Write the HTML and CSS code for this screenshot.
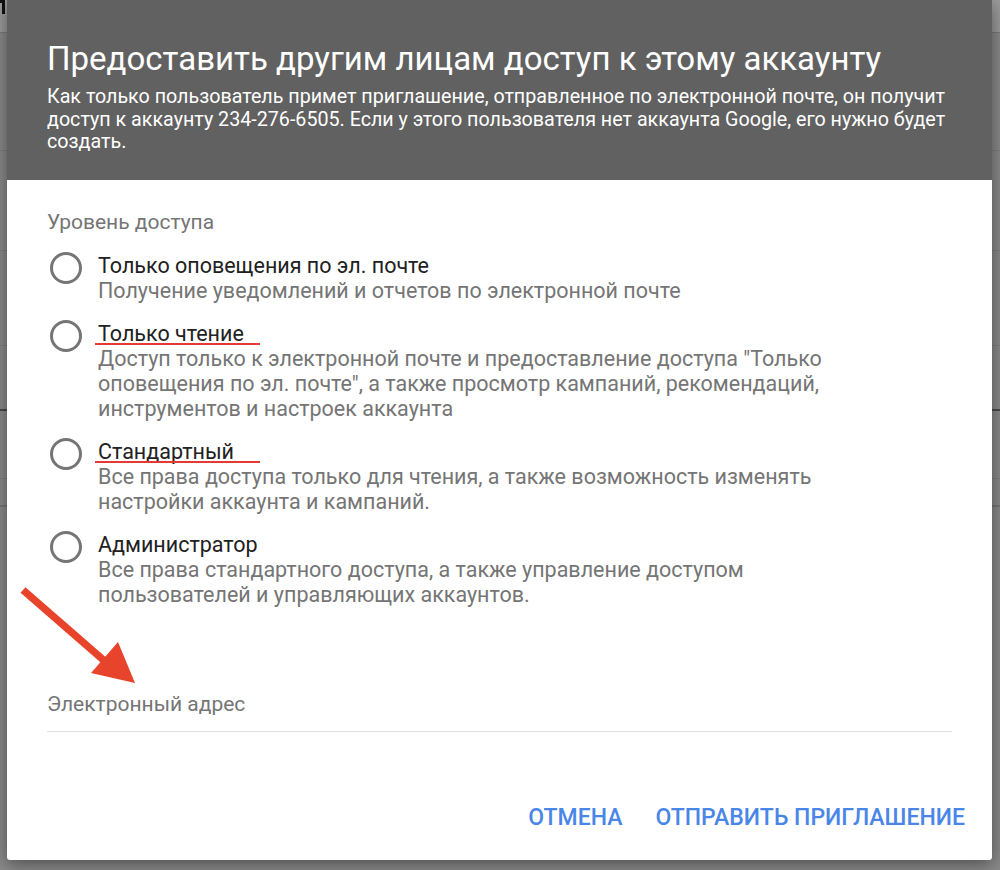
FILE: index.html
```html
<!DOCTYPE html>
<html lang="ru">
<head>
  <meta charset="UTF-8">
  <title>Доступ к аккаунту</title>
  <link rel="stylesheet" href="styles.css">
</head>
<body>
  <!-- страница под затемнением -->
  <div class="page">
    <div class="page-bar"><span class="page-corner"></span></div>
    <div class="page-row r1"></div>
    <div class="page-row r2"></div>
    <div class="page-row r3"></div>
    <div class="page-row r4"></div>
    <div class="page-row r5"></div>
    <div class="page-row r6"></div>
  </div>

  <div class="dialog">
    <div class="dialog-head">
      <h1>Предоставить другим лицам доступ к этому аккаунту</h1>
      <p>Как только пользователь примет приглашение, отправленное по электронной почте, он получит доступ к аккаунту 234-276-6505. Если у этого пользователя нет аккаунта Google, его нужно будет создать.</p>
    </div>

    <div class="dialog-body">
      <div class="section-label">Уровень доступа</div>

      <div class="option">
        <span class="radio"></span>
        <div class="option-text">
          <div class="option-title">Только оповещения по эл. почте</div>
          <div class="option-desc">Получение уведомлений и отчетов по электронной почте</div>
        </div>
      </div>

      <div class="option">
        <span class="radio"></span>
        <div class="option-text">
          <div class="option-title">Только чтение<span class="mark"></span></div>
          <div class="option-desc">Доступ только к электронной почте и предоставление доступа "Только оповещения по эл. почте", а также просмотр кампаний, рекомендаций, инструментов и настроек аккаунта</div>
        </div>
      </div>

      <div class="option">
        <span class="radio"></span>
        <div class="option-text">
          <div class="option-title">Стандартный<span class="mark"></span></div>
          <div class="option-desc">Все права доступа только для чтения, а также возможность изменять настройки аккаунта и кампаний.</div>
        </div>
      </div>

      <div class="option">
        <span class="radio"></span>
        <div class="option-text">
          <div class="option-title">Администратор</div>
          <div class="option-desc">Все права стандартного доступа, а также управление доступом пользователей и управляющих аккаунтов.</div>
        </div>
      </div>

      <div class="field">Электронный адрес</div>
    </div>

    <div class="dialog-actions">
      <button class="btn">Отмена</button>
      <button class="btn">Отправить приглашение</button>
    </div>

    <svg class="arrow" width="140" height="120" viewBox="0 0 140 120">
      <line x1="13" y1="10" x2="98" y2="84" stroke="#e8442b" stroke-width="7.5"/>
      <polygon points="125,103 81,93 108,62" fill="#e8442b"/>
    </svg>
  </div>
</body>
</html>
```

FILE: styles.css
```css
html, body { margin: 0; padding: 0; }
body {
  font-family: Roboto, "Noto Sans", Arial, sans-serif;
  background-color: #8a8a8a;
  width: 1000px; height: 870px; overflow: hidden;
  position: relative;
}

/* фон */
.page-bar { position: relative; height: 32px; background: #9c9c9c; border-bottom: 1px solid #7a7a7a; }
.page-corner {
  position: absolute; left: 0; top: 0; width: 5px; height: 14px;
  border-top: 3px solid #111; border-right: 3px solid #111; box-sizing: border-box;
}
.page-row { border-bottom: 1px solid #7f7f7f; }
.r1 { height: 117px; }
.r2 { height: 99px; }
.r3 { height: 94px; }
.r4 { height: 63px; border-bottom: 2px solid #4a4a4a; }
.r5 { height: 67px; }
.r6 { height: 26px; border-bottom: 2px solid #777; }

/* диалог */
.dialog {
  position: absolute; left: 7px; top: 0; width: 985px;
  background: #fff; border-radius: 0 0 3px 3px;
  box-shadow: 0 4px 18px rgba(0, 0, 0, 0.45);
  color: #212121;
}
.dialog-head {
  background: #616161; color: #fff;
  padding: 40px 40px 26px;
}
.dialog-head h1 {
  margin: 0; font-size: 33px; line-height: 38px; font-weight: 400;
}
.dialog-head p {
  margin: 8px 0 0; font-size: 19.7px; line-height: 22.5px;
}

.dialog-body { padding: 30px 40px 0; }
.section-label { font-size: 21px; line-height: 25px; color: #757575; margin-bottom: 18px; }

.option { display: flex; align-items: flex-start; margin-bottom: 18px; }
.radio {
  flex: none; width: 26px; height: 26px; border: 3px solid #757575; border-radius: 50%;
  margin: -1px 16px 0 3px;
}
.option-text { flex: 1; max-width: 750px; }
.option-title { position: relative; display: inline-block; font-size: 21.5px; line-height: 25px; color: #212121; }
.option-desc { font-size: 21.5px; line-height: 25px; color: #757575; }
.mark {
  position: absolute; left: -3px; bottom: 1px; width: 165px; height: 2px;
  background: #e53935;
}

.field {
  margin-top: 85px; padding-bottom: 14px;
  font-size: 21px; line-height: 25px; color: #757575;
  border-bottom: 1px solid #e0e0e0;
}

.dialog-actions {
  display: flex; justify-content: flex-end; gap: 33px;
  padding: 72px 27px 29px;
}
.btn {
  border: none; background: none; padding: 0; cursor: pointer;
  font-family: inherit; font-size: 23px; line-height: 27px; font-weight: 500;
  text-transform: uppercase; color: #4a86e8;
}

.arrow { position: absolute; left: 3px; top: 580px; }
```
